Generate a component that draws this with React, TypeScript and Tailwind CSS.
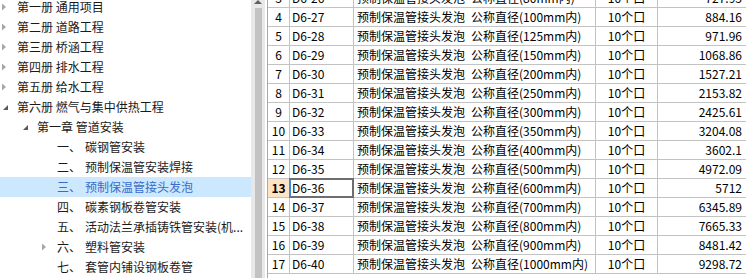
import React from 'react';

type TreeItem = {
  level: number;
  arrow?: 'open' | 'closed';
  num?: string;
  label: string;
  selected?: boolean;
};

const tree: TreeItem[] = [
  { level: 0, arrow: 'closed', label: '第一册 通用项目' },
  { level: 0, arrow: 'closed', label: '第二册 道路工程' },
  { level: 0, arrow: 'closed', label: '第三册 桥涵工程' },
  { level: 0, arrow: 'closed', label: '第四册 排水工程' },
  { level: 0, arrow: 'closed', label: '第五册 给水工程' },
  { level: 0, arrow: 'open', label: '第六册 燃气与集中供热工程' },
  { level: 1, arrow: 'open', label: '第一章 管道安装' },
  { level: 2, num: '一、', label: '碳钢管安装' },
  { level: 2, num: '二、', label: '预制保温管安装焊接' },
  { level: 2, num: '三、', label: '预制保温管接头发泡', selected: true },
  { level: 2, num: '四、', label: '碳素钢板卷管安装' },
  { level: 2, num: '五、', label: '活动法兰承插铸铁管安装(机...' },
  { level: 2, arrow: 'closed', num: '六、', label: '塑料管安装' },
  { level: 2, num: '七、', label: '套管内铺设钢板卷管' },
];

const rows = [
  { n: 3, code: 'D6-26', size: '80', price: '727.93' },
  { n: 4, code: 'D6-27', size: '100', price: '884.16' },
  { n: 5, code: 'D6-28', size: '125', price: '971.96' },
  { n: 6, code: 'D6-29', size: '150', price: '1068.86' },
  { n: 7, code: 'D6-30', size: '200', price: '1527.21' },
  { n: 8, code: 'D6-31', size: '250', price: '2153.82' },
  { n: 9, code: 'D6-32', size: '300', price: '2425.61' },
  { n: 10, code: 'D6-33', size: '350', price: '3204.08' },
  { n: 11, code: 'D6-34', size: '400', price: '3602.1' },
  { n: 12, code: 'D6-35', size: '500', price: '4972.09' },
  { n: 13, code: 'D6-36', size: '600', price: '5712' },
  { n: 14, code: 'D6-37', size: '700', price: '6345.89' },
  { n: 15, code: 'D6-38', size: '800', price: '7665.33' },
  { n: 16, code: 'D6-39', size: '900', price: '8481.42' },
  { n: 17, code: 'D6-40', size: '1000', price: '9298.72' },
];

function Arrow({ kind }: { kind?: 'open' | 'closed' }) {
  if (kind === 'closed') {
    return (
      <svg width="17" height="20" viewBox="0 0 17 20" className="shrink-0">
        <path d="M2 6.5 L6 10 L2 13.5 Z" fill="#a6a6a6" />
      </svg>
    );
  }
  if (kind === 'open') {
    return (
      <svg width="17" height="20" viewBox="0 0 17 20" className="shrink-0">
        <path d="M8 8 L8 13 L3 13 Z" fill="#595959" />
      </svg>
    );
  }
  return <span className="w-[17px] shrink-0" />;
}

function Tree() {
  return (
    <div className="w-[251px] shrink-0 overflow-hidden bg-white">
      <div className="mt-[-3px]">
        {tree.map((it, i) => (
          <div
            key={i}
            className={`flex h-[20px] items-center whitespace-nowrap ${
              it.selected ? 'bg-[#cce8ff] text-[#3a6bc9]' : 'text-[#1a1a1a]'
            } ${it.level === 0 ? 'pl-0' : it.level === 1 ? 'pl-[20px]' : 'pl-[40px]'}`}
          >
            <Arrow kind={it.arrow} />
            {it.num && <span className="w-[28px] shrink-0">{it.num}</span>}
            <span>{it.label}</span>
          </div>
        ))}
      </div>
    </div>
  );
}

function Scrollbar() {
  return (
    <div className="flex w-[14px] shrink-0 flex-col items-center bg-[#e8e8e8]">
      <svg width="8" height="4" viewBox="0 0 8 4" className="shrink-0">
        <path d="M0 4 L4 0 L8 4 Z" fill="#606060" />
      </svg>
      <div className="mt-[4px] w-[7px] flex-1 bg-[#c2c2c2]" />
    </div>
  );
}

function Grid() {
  return (
    <div className="flex-1 overflow-hidden border-l border-[#a9a9a9] bg-white">
      <div className="mt-[-11px] text-[12px] text-black">
        {rows.map((r) => {
          const sel = r.n === 13;
          return (
            <div key={r.n} className="flex h-[19px] border-b border-[#c3c3c3] leading-[18px]">
              <div
                className={`w-[22px] shrink-0 border-r border-[#c3c3c3] text-center ${
                  sel ? 'bg-[#fde4c5] font-bold' : ''
                }`}
              >
                {r.n}
              </div>
              <div className="relative w-[64px] shrink-0 border-r border-[#c3c3c3] pl-[2px]">
                {r.code}
                {sel && (
                  <div className="absolute -bottom-[1px] -left-[1px] -right-[1px] -top-[1px] border-2 border-[#6e6e6e] border-l-[#3d8ae6]" />
                )}
              </div>
              <div className="w-[242px] shrink-0 overflow-hidden whitespace-nowrap border-r border-[#c3c3c3] pl-[3px]">
                预制保温管接头发泡{'\u2002'}公称直径({r.size}mm内)
              </div>
              <div className="w-[62px] shrink-0 border-r border-[#c3c3c3] text-center">10个口</div>
              <div className="w-[88px] shrink-0 pr-[4px] text-right">{r.price}</div>
            </div>
          );
        })}
      </div>
    </div>
  );
}

export default function App() {
  return (
    <div
      className="flex h-[278px] w-[746px] overflow-hidden bg-white text-[12px]"
      style={{ fontFamily: '"Noto Sans CJK SC", "Noto Sans", sans-serif' }}
    >
      <Tree />
      <Scrollbar />
      <div className="w-[2px] shrink-0 bg-white" />
      <Grid />
    </div>
  );
}
